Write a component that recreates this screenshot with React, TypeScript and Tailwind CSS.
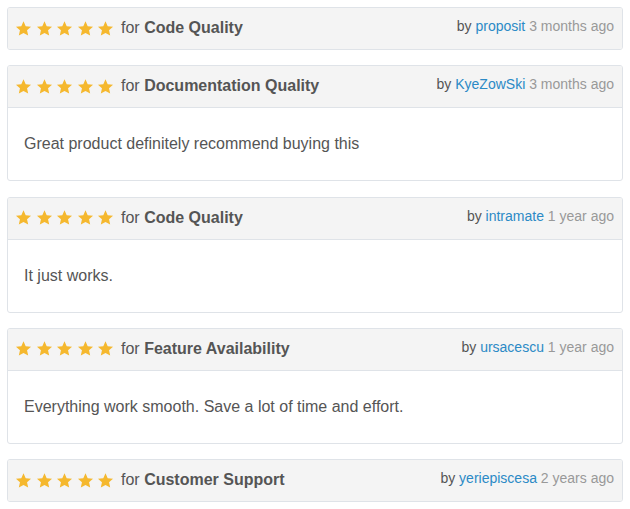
const reviews = [
  { topic: "Code Quality", user: "proposit", when: "3 months ago", text: "" },
  {
    topic: "Documentation Quality",
    user: "KyeZowSki",
    when: "3 months ago",
    text: "Great product definitely recommend buying this",
  },
  { topic: "Code Quality", user: "intramate", when: "1 year ago", text: "It just works." },
  {
    topic: "Feature Availability",
    user: "ursacescu",
    when: "1 year ago",
    text: "Everything work smooth. Save a lot of time and effort.",
  },
  { topic: "Customer Support", user: "yeriepiscesa", when: "2 years ago", text: "" },
];

function Star() {
  return (
    <svg viewBox="0 0 24 24" className="w-[17px] h-[17px]" fill="#f5b82e">
      <path d="M12 1.8l3.1 6.9 7.5.8-5.6 5.1 1.6 7.4L12 18.2 5.4 22l1.6-7.4-5.6-5.1 7.5-.8z" />
    </svg>
  );
}

export default function App() {
  return (
    <div
      className="bg-white pt-[7px] px-[7px] text-[#555]"
      style={{ fontFamily: '"Liberation Sans", Arial, sans-serif' }}
    >
      {reviews.map((r, i) => (
        <div
          key={i}
          className="mb-[15.25px] border border-[#dfe3e8] rounded-[3px] bg-white overflow-hidden"
        >
          {/* header: rating, topic, author and date */}
          <div className="flex items-start justify-between bg-[#f4f4f4] pl-[7px] pr-[8px] pt-[8px] pb-[9px]">
            <div className="flex items-center text-base leading-6">
              <div className="flex items-center gap-[3.5px] mr-[7px]">
                {[0, 1, 2, 3, 4].map((s) => (
                  <Star key={s} />
                ))}
              </div>
              <span>for&nbsp;</span>
              <span className="font-bold">{r.topic}</span>
            </div>
            <div className="text-sm leading-5">
              by <a className="text-[#2b8ac6]">{r.user}</a>{" "}
              <span className="text-[#999]">{r.when}</span>
            </div>
          </div>
          {r.text && (
            <div className="border-t border-[#dfe3e8] px-4 py-6 text-base leading-6">
              {r.text}
            </div>
          )}
        </div>
      ))}
    </div>
  );
}
